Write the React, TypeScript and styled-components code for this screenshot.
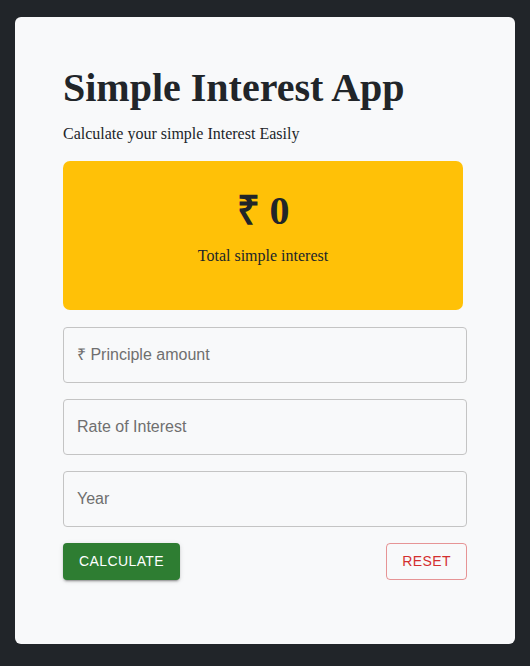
import React, { useState } from "react";
import styled, { createGlobalStyle } from "styled-components";

const GlobalStyle = createGlobalStyle`
  html, body { margin: 0; padding: 0; background: #212529; }
  * { box-sizing: border-box; }
`;

const Page = styled.div`
  min-height: 666px;
  padding: 17px 15px 22px;
  background: #212529;
`;

const Card = styled.div`
  width: 500px;
  background: #f8f9fa;
  border-radius: 6px;
  padding: 47px 48px 64px;
  font-family: "Liberation Serif", "Times New Roman", serif;
  color: #212529;
`;

const Title = styled.h1`
  margin: 0 0 10px;
  font-size: 40px;
  line-height: 48px;
  font-weight: 700;
`;

const Subtitle = styled.p`
  margin: 0 0 15px;
  font-size: 16px;
  line-height: 24px;
`;

const ResultBox = styled.div`
  width: 400px;
  height: 149px;
  background: #ffc107;
  border-radius: 7px;
  display: flex;
  flex-direction: column;
  align-items: center;
  padding-top: 26px;
`;

const Amount = styled.div`
  font-size: 40px;
  font-weight: 700;
  line-height: 48px;
`;

const Caption = styled.p`
  margin: 9px 0 0;
  font-size: 16px;
  line-height: 24px;
`;

const Form = styled.form`
  margin-top: 17px;
  display: flex;
  flex-direction: column;
  gap: 16px;
`;

const Field = styled.input`
  width: 404px;
  height: 56px;
  border: 1px solid #c4c4c4;
  border-radius: 4px;
  background: transparent;
  padding: 0 13px;
  font-family: "Liberation Sans", Arial, sans-serif;
  font-size: 16px;
  color: #212529;
  outline: none;
  &::placeholder { color: #6f6f6f; opacity: 1; }
`;

const Actions = styled.div`
  display: flex;
  justify-content: space-between;
  align-items: center;
`;

const Button = styled.button<{ $variant: "contained" | "outlined" }>`
  font-family: "Liberation Sans", Arial, sans-serif;
  font-size: 14px;
  font-weight: 400;
  letter-spacing: 0.4px;
  text-transform: uppercase;
  line-height: 24.5px;
  padding: 6px 16px;
  border-radius: 4px;
  cursor: pointer;
  ${(p) =>
    p.$variant === "contained"
      ? `
    background: #2e7d32;
    color: #fff;
    border: none;
    box-shadow: 0px 3px 1px -2px rgba(0,0,0,0.2), 0px 2px 2px 0px rgba(0,0,0,0.14), 0px 1px 5px 0px rgba(0,0,0,0.12);
  `
      : `
    background: transparent;
    color: #d32f2f;
    border: 1px solid rgba(211,47,47,0.5);
    padding: 5px 15px;
  `}
`;

export default function App() {
  const [p, setP] = useState("");
  const [r, setR] = useState("");
  const [y, setY] = useState("");
  const [si, setSi] = useState(0);

  const calc = (e: React.FormEvent) => {
    e.preventDefault();
    setSi((Number(p) * Number(r) * Number(y)) / 100);
  };
  const reset = () => {
    setP("");
    setR("");
    setY("");
    setSi(0);
  };

  return (
    <>
      <GlobalStyle />
      <Page>
        <Card>
          <Title>Simple Interest App</Title>
          <Subtitle>Calculate your simple Interest Easily</Subtitle>
          <ResultBox>
            <Amount>₹ {si}</Amount>
            <Caption>Total simple interest</Caption>
          </ResultBox>
          <Form onSubmit={calc}>
            <Field placeholder="₹ Principle amount" value={p} onChange={(e) => setP(e.target.value)} />
            <Field placeholder="Rate of Interest" value={r} onChange={(e) => setR(e.target.value)} />
            <Field placeholder="Year" value={y} onChange={(e) => setY(e.target.value)} />
            <Actions>
              <Button type="submit" $variant="contained">Calculate</Button>
              <Button type="button" $variant="outlined" onClick={reset}>Reset</Button>
            </Actions>
          </Form>
        </Card>
      </Page>
    </>
  );
}
